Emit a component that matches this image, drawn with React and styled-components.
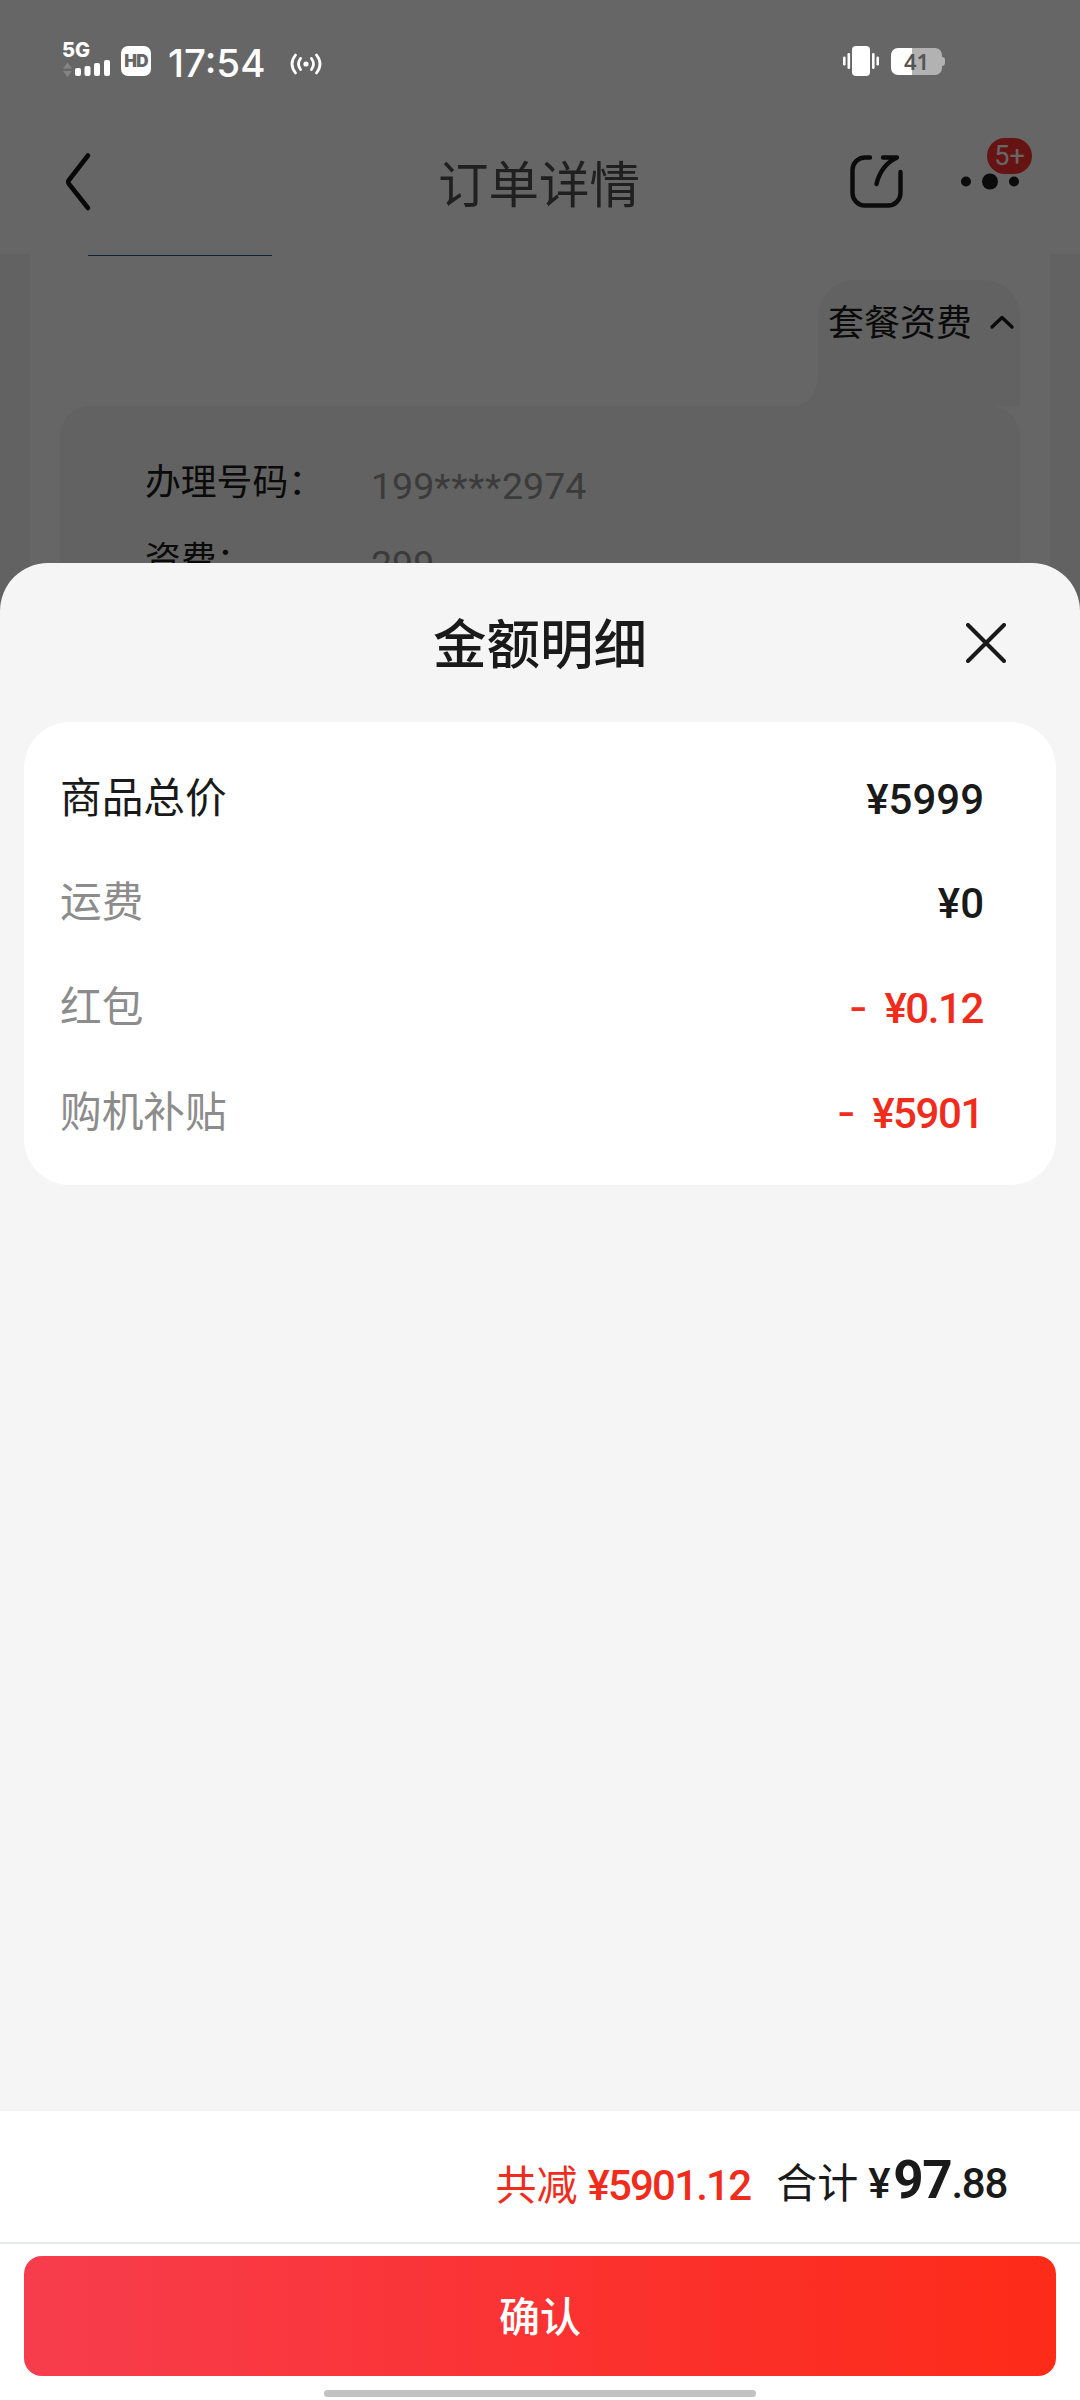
import React from 'react'
import styled, { createGlobalStyle } from 'styled-components'

const GlobalStyle = createGlobalStyle`
  * {
    box-sizing: border-box;
  }

  body {
    margin: 0;
    font-family: "Noto Sans CJK SC", sans-serif;
    color: #1a1a1a;
  }
`

const Screen = styled.div`
  position: relative;
  width: 1080px;
  height: 2400px;
  overflow: hidden;
  background: #fff;
`

// status bar

const StatusBar = styled.div`
  position: relative;
  z-index: 2;
  display: flex;
  align-items: center;
  height: 122px;
  padding: 0 138px 0 62px;
  color: #fff;
`

const Signal = styled.div`
  width: 49px;
  height: 38px;
  margin: 0 10px 4px 0;
  font: 800 20px/20px Inter, sans-serif;
`

const SignalBars = styled.svg`
  display: block;
`

const HdBadge = styled.div`
  width: 30px;
  height: 30px;
  border-radius: 7px;
  background: #fff;
  color: #666;
  font: 900 17px/30px Inter, sans-serif;
  letter-spacing: -0.7px;
  text-align: center;
`

const Clock = styled.div`
  margin: 3px 0 0 17px;
  width: 98px;
  font: 500 38.5px/46px Inter, sans-serif;
  white-space: nowrap;
`

const Hotspot = styled.svg`
  margin: 5px auto 0 24px;
`

const Battery = styled.div`
  position: relative;
  width: 51px;
  height: 27px;
  margin-left: 12px;
  border-radius: 7px;
  background: linear-gradient(90deg, #fff 41%, #b2b2b2 41%);
  color: #555;
  font: 600 22px/27px "Noto Sans", sans-serif;
  text-align: center;

  &::after {
    content: '';
    position: absolute;
    right: -3px;
    top: 9px;
    width: 3px;
    height: 9px;
    border-radius: 0 3px 3px 0;
    background: #b2b2b2;
  }
`

// order page under the mask

const NavBar = styled.div`
  display: grid;
  grid-template-columns: 1fr 240px 1fr;
  align-items: center;
  height: 132px;
  padding: 0 54px 13px 62px;
`

const NavTitle = styled.div`
  padding: 0 10px 2px 0;
  color: #505050;
  font-size: 50.5px;
  line-height: 70px;
  text-align: center;
`

const NavActions = styled.div`
  display: flex;
  align-items: center;
  justify-content: flex-end;
  gap: 56px;
`

const More = styled.div`
  position: relative;
  width: 67px;
  height: 53px;
`

const MoreBadge = styled.span`
  position: absolute;
  left: 28px;
  top: -17px;
  width: 45px;
  height: 36px;
  border-radius: 18px;
  background: #ff3030;
  color: #fff;
  font: 400 27px/37px Roboto, sans-serif;
  text-align: center;
`

const OrderPage = styled.div`
  height: 400px;
  padding: 0 30px;
  background: #f4f4f4;
`

const OrderCard = styled.div`
  display: flex;
  flex-direction: column;
  height: 100%;
  padding: 1px 30px 0;
  background: #fff;
`

const BlueLine = styled.div`
  width: 184px;
  height: 1px;
  margin-left: 28px;
  background: #1d5a8a;
`

const Tab = styled.div`
  position: relative;
  display: flex;
  align-items: center;
  align-self: flex-end;
  justify-content: space-between;
  width: 202px;
  height: 126px;
  margin-top: 24px;
  padding: 0 5px 46px 10px;
  border-radius: 36px 36px 0 0;
  background: #f4f4f4;
  font-size: 36px;
  line-height: 50px;

  &::before {
    content: '';
    position: absolute;
    left: -22px;
    bottom: 0;
    width: 22px;
    height: 32px;
    background: radial-gradient(22px 32px at 0 0, transparent 98%, #f4f4f4 100%);
  }

  svg {
    margin-top: 3px;
  }
`

const Details = styled.div`
  flex: 1;
  padding: 50px 85px 0;
  border-radius: 30px 30px 0 0;
  background: #f4f4f4;
`

const DetailRow = styled.div`
  display: flex;
  height: 78px;
  font-size: 35.8px;
  line-height: 46px;
`

const DetailLabel = styled.span`
  width: 226px;
`

const DetailValue = styled.span`
  padding-top: 7px;
  color: #949494;
  font-family: Roboto, sans-serif;
  font-size: 37.6px;
`

const Stars = styled.span`
  letter-spacing: 0.7px;
  vertical-align: -1px;
`

const Mask = styled.div`
  position: absolute;
  inset: 0;
  background: rgba(0, 0, 0, 0.6);
`

// bottom sheet

const Sheet = styled.div`
  position: absolute;
  left: 0;
  right: 0;
  top: 563px;
  bottom: 0;
  display: flex;
  flex-direction: column;
  border-radius: 48px 48px 0 0;
  background: #f5f5f5;
  overflow: hidden;
`

const SheetHeader = styled.div`
  display: grid;
  grid-template-columns: 1fr auto 1fr;
  align-items: center;
  height: 159px;
  padding: 0 74px;
`

const SheetTitle = styled.div`
  grid-column: 2;
  padding-bottom: 4px;
  font-size: 53.5px;
  font-weight: 500;
  line-height: 80px;
`

const CloseIcon = styled.svg`
  justify-self: end;
`

const PriceCard = styled.div`
  height: 463px;
  margin: 0 24px;
  padding: 20px 72px 0 36px;
  border-radius: 46px;
  background: #fff;
`

const PriceRow = styled.div`
  display: flex;
  align-items: center;
  justify-content: space-between;
  height: 104.6px;
  font-size: 41.7px;
`

const PriceLabel = styled.span`
  padding-top: 1px;
  color: ${({ $muted }) => ($muted ? '#8c8c8c' : '#1a1a1a')};
`

const PriceValue = styled.span`
  padding-top: 10px;
  margin-right: ${({ $discount }) => ($discount ? '1px' : '0')};
  color: ${({ $discount }) => ($discount ? '#f02c1c' : '#1a1a1a')};
  font: 500 42px Roboto, sans-serif;
  letter-spacing: ${({ $discount }) => ($discount ? '-1.4px' : '0')};
`

const Minus = styled.span`
  margin-right: 18px;
  font: 500 41px/0 Inter, sans-serif;
  vertical-align: 1px;
`

const Footer = styled.div`
  margin-top: auto;
  height: 289px;
  background: #fff;
`

const Totals = styled.div`
  display: flex;
  align-items: baseline;
  justify-content: flex-end;
  height: 133px;
  padding: 34px 73px 0 0;
  border-bottom: 2px solid #e8ebec;
  font-size: 41px;
  line-height: 70px;
`

const Saved = styled.span`
  position: relative;
  top: 2px;
  margin-right: 26px;
  color: #f02c1c;
`

const Amount = styled.span`
  margin-left: 10px;
  font-family: Roboto, sans-serif;
  font-size: 42px;
  font-weight: 500;
  letter-spacing: ${({ $tight }) => ($tight ? '-1.8px' : '-1.3px')};
`

const Big = styled.span`
  margin-left: 4px;
  font-size: 53px;
  font-weight: 700;
`

const ConfirmButton = styled.button`
  display: block;
  width: 1032px;
  height: 120px;
  margin: 12px auto 14px;
  padding: 0 0 3px;
  border: 0;
  border-radius: 18px;
  background: linear-gradient(90deg, #f73d4d, #fb3231 52%, #fd2b18);
  color: #fff;
  font: 500 41px/117px "Noto Sans CJK SC", sans-serif;
`

const HomeIndicator = styled.div`
  width: 432px;
  height: 7px;
  margin: 0 auto;
  border-radius: 4px;
  background: #c2c2c2;
`

const prices = [
  { label: '商品总价', value: '¥5999' },
  { label: '运费', value: '¥0', muted: true },
  { label: '红包', value: '¥0.12', muted: true, discount: true },
  { label: '购机补贴', value: '¥5901', muted: true, discount: true },
]

export default function App () {
  return (
    <>
      <GlobalStyle/>
      <Screen>
        <StatusBar>
          <Signal>
            5G
            <SignalBars width="49" height="18" viewBox="0 0 49 18" fill="#fff">
              <path d="M5.5 2.5l4.500 6H1zM5.500 17L1 11h9z" fill="#858585"/>
              <rect x="13" y="8" width="6" height="8" rx="2"/>
              <rect x="22.5" y="6" width="6" height="10" rx="2"/>
              <rect x="32" y="3" width="6" height="13" rx="2"/>
              <rect x="42" y="0" width="6" height="16" rx="2"/>
            </SignalBars>
          </Signal>
          <HdBadge>HD</HdBadge>
          <Clock>17:54</Clock>
          <Hotspot width="32" height="22" viewBox="0 0 32 22" fill="none" stroke="#fff" strokeWidth="2.8" strokeLinecap="round">
            <circle cx="16" cy="11" r="2.6" fill="#fff" stroke="none"/>
            <path d="M10.5 5.5q-4 5.5 0 11M21.5 5.5q4 5.5 0 11M5.5 2q-7 9 0 18M26.5 2q7 9 0 18"/>
          </Hotspot>
          <svg width="36" height="30" viewBox="0 0 36 30" fill="#fff">
            <rect x="9" width="18" height="30" rx="4"/>
            <rect x="4.5" y="7" width="2.6" height="16" rx="1.3"/>
            <rect y="10.5" width="2.6" height="9" rx="1.3"/>
            <rect x="29" y="7" width="2.6" height="16" rx="1.3"/>
            <rect x="33.4" y="10.5" width="2.6" height="9" rx="1.3"/>
          </svg>
          <Battery>41</Battery>
        </StatusBar>

        <NavBar>
          <svg width="32" height="60" viewBox="0 0 32 60" fill="none" stroke="#161616" strokeWidth="4.6" strokeLinecap="round" strokeLinejoin="round">
            <path d="M26 3.5L7 28q-1.5 2 0 4L26 56"/>
          </svg>
          <NavTitle>订单详情</NavTitle>
          <NavActions>
            <svg width="53" height="53" viewBox="0 0 53 53" fill="none" stroke="#1c1c1c" strokeWidth="4.4" strokeLinecap="round" strokeLinejoin="round">
              <path d="M20 2.5H15A12.5 12.5 0 0 0 2.5 15V38A12.5 12.5 0 0 0 15 50.5H38A12.5 12.5 0 0 0 50.5 38V17"/>
              <path d="M33 2.5H47Q31 10 26.5 29"/>
            </svg>
            <More>
              <svg width="67" height="53" viewBox="0 0 67 53" fill="#1c1c1c">
                <circle cx="7" cy="26.5" r="5"/>
                <circle cx="31" cy="26.5" r="8"/>
                <circle cx="55" cy="26.5" r="5"/>
              </svg>
              <MoreBadge>5+</MoreBadge>
            </More>
          </NavActions>
        </NavBar>

        <OrderPage>
          <OrderCard>
            <BlueLine/>
            <Tab>
              套餐资费
              <svg width="26" height="18" viewBox="0 0 26 18" fill="none" stroke="#1a1a1a" strokeWidth="3.4" strokeLinecap="round" strokeLinejoin="round">
                <path d="M3 14L13 4.5L23 14"/>
              </svg>
            </Tab>
            <Details>
              <DetailRow>
                <DetailLabel>办理号码：</DetailLabel>
                <DetailValue>199<Stars>****</Stars>2974</DetailValue>
              </DetailRow>
              <DetailRow>
                <DetailLabel>资费：</DetailLabel>
                <DetailValue>299</DetailValue>
              </DetailRow>
            </Details>
          </OrderCard>
        </OrderPage>

        <Mask/>

        <Sheet>
          <SheetHeader>
            <SheetTitle>金额明细</SheetTitle>
            <CloseIcon width="40" height="40" viewBox="0 0 40 40" stroke="#1a1a1a" strokeWidth="4" strokeLinecap="round">
              <path d="M2 2L38 38M38 2L2 38"/>
            </CloseIcon>
          </SheetHeader>

          <PriceCard>
            {prices.map(price => (
              <PriceRow key={price.label}>
                <PriceLabel $muted={price.muted}>{price.label}</PriceLabel>
                <PriceValue $discount={price.discount}>
                  {price.discount && <Minus>-</Minus>}
                  {price.value}
                </PriceValue>
              </PriceRow>
            ))}
          </PriceCard>

          <Footer>
            <Totals>
              <Saved>共减<Amount $tight>¥5901.12</Amount></Saved>
              <span>合计<Amount>¥<Big>97</Big>.88</Amount></span>
            </Totals>
            <ConfirmButton>确认</ConfirmButton>
            <HomeIndicator/>
          </Footer>
        </Sheet>
      </Screen>
    </>
  )
}
